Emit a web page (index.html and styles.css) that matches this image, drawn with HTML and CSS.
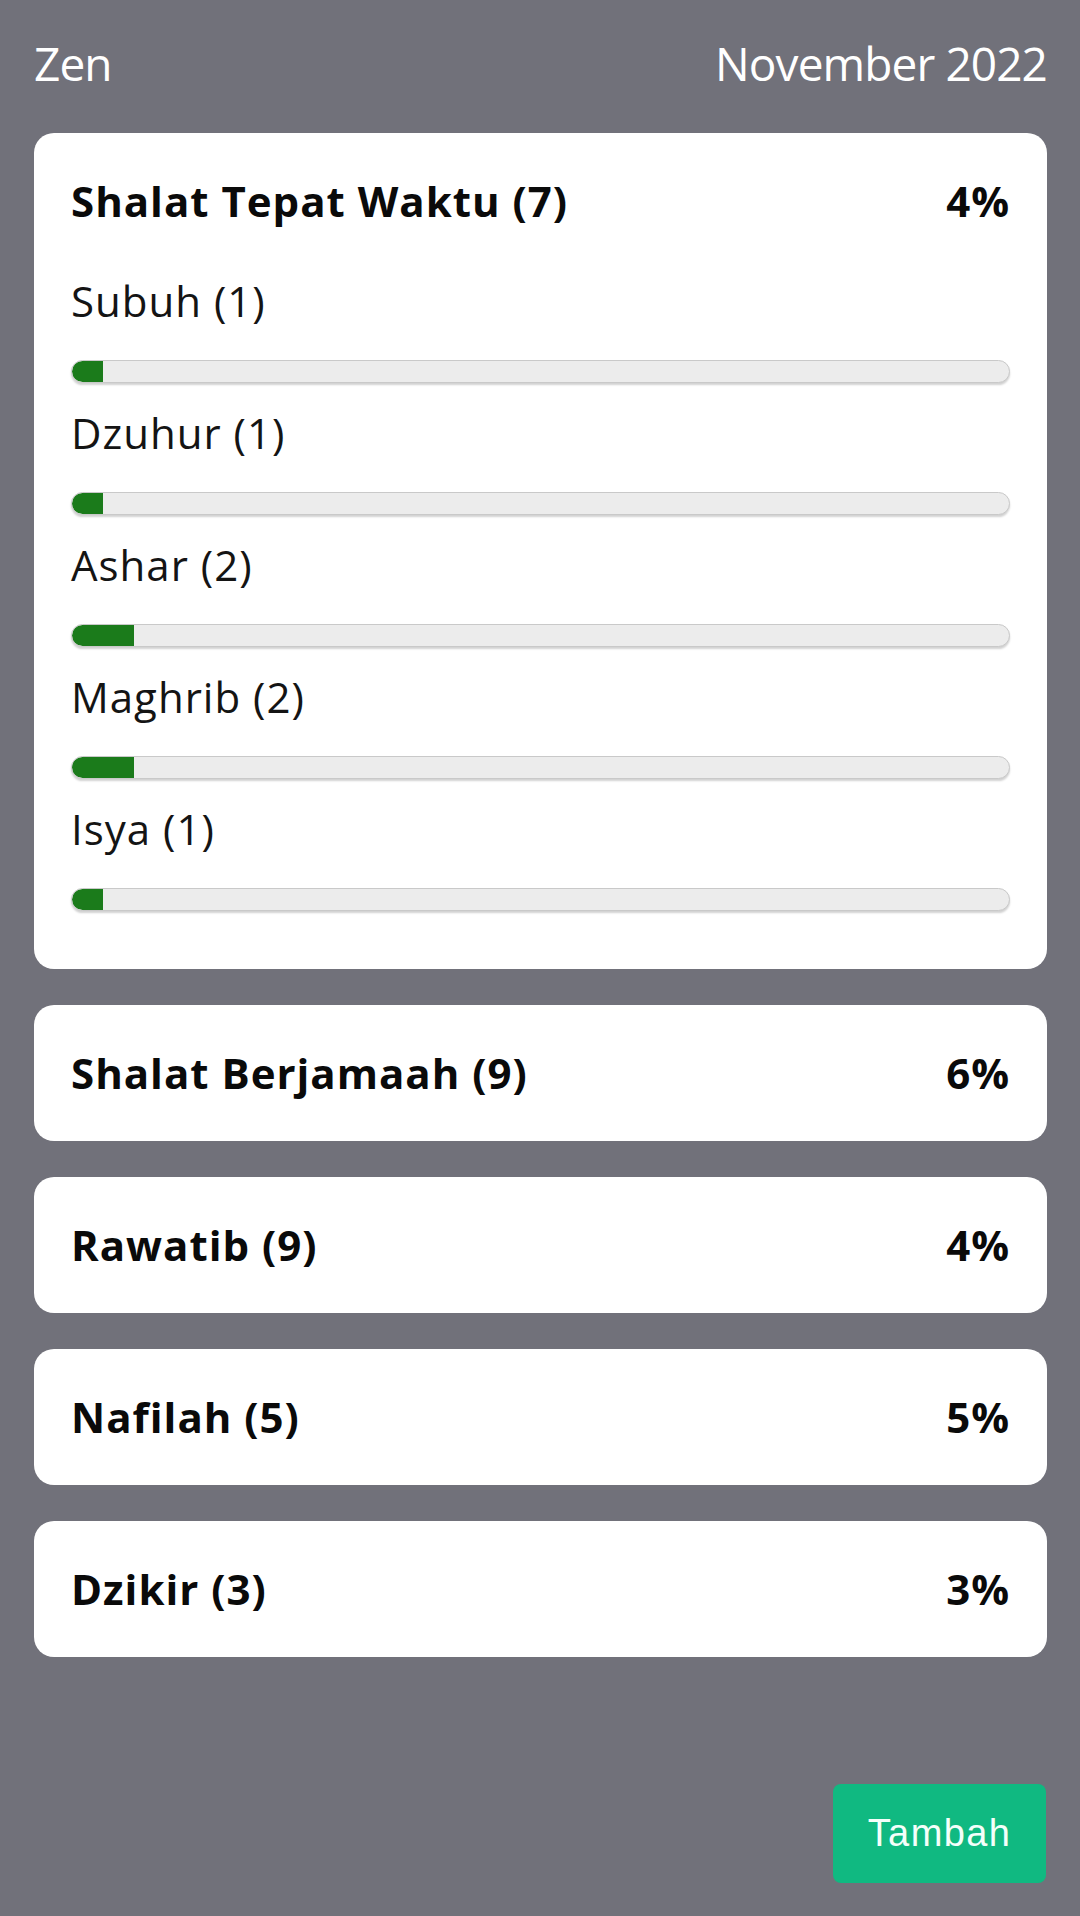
FILE: index.html
```
<!DOCTYPE html>
<html lang="id">
<head>
<meta charset="utf-8">
<title>Zen</title>
<link rel="stylesheet" href="styles.css">
</head>
<body>
<header class="topbar">
  <span class="brand">Zen</span>
  <span class="month">November 2022</span>
</header>
<main class="list">
  <section class="card card-open">
    <div class="card-head"><span>Shalat Tepat Waktu (7)</span><span>4%</span></div>
    <ul class="items">
      <li class="item"><div class="item-label">Subuh (1)</div><div class="bar"><div class="bar-fill" style="width:3.33%"></div></div></li>
      <li class="item"><div class="item-label">Dzuhur (1)</div><div class="bar"><div class="bar-fill" style="width:3.33%"></div></div></li>
      <li class="item"><div class="item-label">Ashar (2)</div><div class="bar"><div class="bar-fill" style="width:6.67%"></div></div></li>
      <li class="item"><div class="item-label">Maghrib (2)</div><div class="bar"><div class="bar-fill" style="width:6.67%"></div></div></li>
      <li class="item"><div class="item-label">Isya (1)</div><div class="bar"><div class="bar-fill" style="width:3.33%"></div></div></li>
    </ul>
  </section>
  <section class="card"><div class="card-head"><span>Shalat Berjamaah (9)</span><span>6%</span></div></section>
  <section class="card"><div class="card-head"><span>Rawatib (9)</span><span>4%</span></div></section>
  <section class="card"><div class="card-head"><span>Nafilah (5)</span><span>5%</span></div></section>
  <section class="card"><div class="card-head"><span>Dzikir (3)</span><span>3%</span></div></section>
</main>
<button class="add-btn" type="button">Tambah</button>
</body>
</html>
```
FILE: styles.css
```
* { box-sizing: border-box; }
html, body { margin: 0; padding: 0; }
body {
  background: #71717a;
  font-family: "Open Sans", "Noto Sans", sans-serif;
  color: #111;
  min-height: 1916px;
}
.topbar {
  display: flex;
  justify-content: space-between;
  padding: 32px 33px 0 34px;
  font-size: 46px;
  line-height: 63px;
  letter-spacing: -0.9px;
  color: #fff;
}
.list {
  display: flex;
  flex-direction: column;
  gap: 36px;
  padding: 38px 33px 0 34px;
}
.card {
  background: #fff;
  border-radius: 20px;
  padding: 40px 37px 41px;
}
.card-open { padding-bottom: 58px; }
.card-head {
  display: flex;
  justify-content: space-between;
  font-weight: 700;
  font-size: 42px;
  line-height: 55px;
  letter-spacing: 1px;
  color: #0a0a0a;
}
.items {
  list-style: none;
  margin: 45px 0 0;
  padding: 0;
  display: flex;
  flex-direction: column;
  gap: 22px;
}
.item-label {
  font-size: 42px;
  line-height: 55px;
  letter-spacing: 1px;
  color: #141414;
}
.bar {
  margin-top: 32px;
  height: 23px;
  background: #ececec;
  border: 1px solid #c9c9c9;
  border-radius: 12px;
  box-shadow: 0 2px 2px rgba(0,0,0,0.18);
  overflow: hidden;
}
.bar-fill {
  height: 100%;
  background: #1b7b1b;
  border-radius: 10px 0 0 10px;
}
.add-btn {
  position: fixed;
  right: 34px;
  bottom: 33px;
  width: 213px;
  height: 99px;
  border: none;
  border-radius: 8px;
  background: #10b981;
  color: #f4fffa;
  font-family: "Liberation Sans", Arial, sans-serif;
  font-size: 38px;
  letter-spacing: 1.4px;
  padding: 0;
}
```
